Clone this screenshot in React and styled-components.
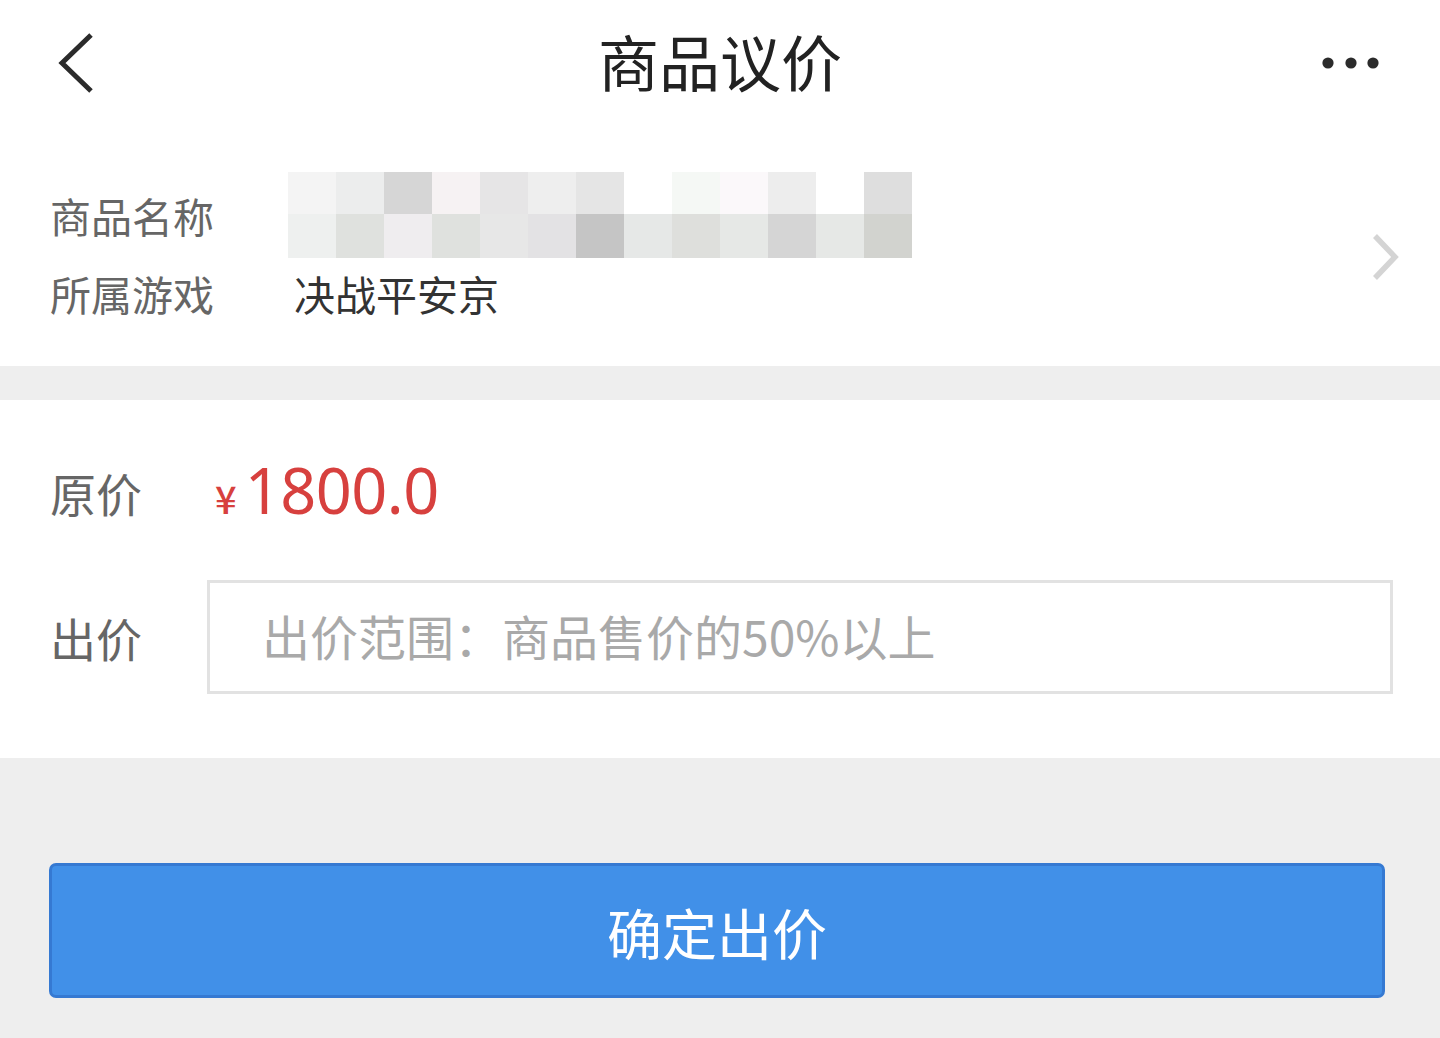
import React from 'react'
import styled, { createGlobalStyle } from 'styled-components';

const GlobalStyle = createGlobalStyle`
  html, body {
    margin: 0;
    padding: 0;
    background: #ffffff;
  }
  body {
    font-family: "Noto Sans CJK SC", "Noto Sans", sans-serif;
  }
  * {
    box-sizing: border-box;
  }
`;

// blurred product name in the screenshot, kept as a mosaic
const mosaicCells = [
  ['#f4f4f4', '#eceded', '#d6d6d6', '#f6f2f3', '#e6e5e6', '#eeeeee', '#e5e5e5', '#ffffff', '#f5f8f5', '#fbf8fa', '#ededed', '#ffffff', '#dedede'],
  ['#eef0ef', '#dfe1de', '#efedef', '#dfe1de', '#e7e7e7', '#e3e2e4', '#c5c5c5', '#e6e8e7', '#dedfdc', '#e6e8e6', '#d5d5d5', '#e6e8e6', '#d2d3cf'],
];

const App = () => {
  return (
    <Page>
      <GlobalStyle />
      <Header>
        <BackButton>
          <svg width="44" height="64" viewBox="0 0 44 64">
            <polyline points="36,4 7,32 36,60" fill="none" stroke="#2b2b2b" strokeWidth="5" strokeLinecap="butt" strokeLinejoin="miter" />
          </svg>
        </BackButton>
        <Title>商品议价</Title>
        <MoreButton>
          <svg width="58" height="14" viewBox="0 0 58 14">
            <circle cx="6" cy="7" r="5.6" fill="#2b2b2b" />
            <circle cx="29" cy="7" r="5.6" fill="#2b2b2b" />
            <circle cx="51" cy="7" r="5.6" fill="#2b2b2b" />
          </svg>
        </MoreButton>
      </Header>

      <InfoSection>
        <InfoList>
          <InfoRow>
            <InfoLabel>商品名称</InfoLabel>
            <Mosaic>
              {mosaicCells.map((row, r) =>
                row.map((c, i) => <MosaicCell key={r + '-' + i} $color={c} />)
              )}
            </Mosaic>
          </InfoRow>
          <InfoRow>
            <InfoLabel>所属游戏</InfoLabel>
            <InfoValue>决战平安京</InfoValue>
          </InfoRow>
        </InfoList>
        <Arrow>
          <svg width="30" height="50" viewBox="0 0 30 50">
            <polyline points="5,4 25,25 5,46" fill="none" stroke="#d4d4d4" strokeWidth="5.5" />
          </svg>
        </Arrow>
      </InfoSection>

      <Divider />

      <PriceSection>
        <PriceRow>
          <PriceLabel>原价</PriceLabel>
          <PriceValue>
            <Currency>¥</Currency>
            <Amount>1800.0</Amount>
          </PriceValue>
        </PriceRow>
        <PriceRow>
          <PriceLabel>出价</PriceLabel>
          <OfferInput placeholder="出价范围：商品售价的50%以上" />
        </PriceRow>
      </PriceSection>

      <Footer>
        <SubmitButton>确定出价</SubmitButton>
      </Footer>
    </Page>
  )
}

const Page = styled.div`
  width: 1440px;
  min-height: 1038px;
  display: flex;
  flex-direction: column;
  background: #ffffff;
`;

const Header = styled.header`
  height: 130px;
  display: grid;
  grid-template-columns: 1fr auto 1fr;
  align-items: center;
`;

const BackButton = styled.div`
  padding-left: 55px;
  display: flex;
  align-items: center;
  margin-top: -4px;
`;

const Title = styled.h1`
  margin: -10px 0 0;
  font-size: 61px;
  font-weight: 400;
  color: #222222;
  line-height: 1;
`;

const MoreButton = styled.div`
  justify-self: end;
  padding-right: 60px;
  display: flex;
  align-items: center;
  margin-top: -4px;
`;

const InfoSection = styled.section`
  height: 236px;
  display: flex;
  align-items: center;
  justify-content: space-between;
  padding: 12px 40px 0 50px;
`;

const InfoList = styled.div`
  display: flex;
  flex-direction: column;
`;

const InfoRow = styled.div`
  height: 78px;
  display: flex;
  align-items: center;
`;

const InfoLabel = styled.span`
  width: 238px;
  font-size: 41px;
  color: #666666;
`;

const InfoValue = styled.span`
  font-size: 41px;
  color: #333333;
  padding-left: 6px;
`;

const Mosaic = styled.div`
  display: grid;
  grid-template-columns: repeat(13, 48px);
  grid-template-rows: 42px 44px;
  margin: -8px 0;
  filter: blur(0.6px);
`;

const MosaicCell = styled.div`
  background: ${p => p.$color};
`;

const Arrow = styled.div`
  display: flex;
  align-items: center;
  margin-top: 6px;
`;

const Divider = styled.div`
  height: 34px;
  background: #eeeeee;
`;

const PriceSection = styled.section`
  height: 358px;
  display: flex;
  flex-direction: column;
  gap: 36px;
  padding: 40px 47px 64px 50px;
`;

const PriceRow = styled.div`
  display: flex;
  align-items: center;
  min-height: 104px;
`;

const PriceLabel = styled.span`
  width: 157px;
  flex-shrink: 0;
  font-size: 46px;
  color: #666666;
`;

const PriceValue = styled.div`
  display: flex;
  align-items: baseline;
  padding-left: 8px;
  margin-top: -6px;
  color: #d7403e;
`;

const Currency = styled.span`
  font-family: "Noto Sans CJK SC", sans-serif;
  font-size: 38px;
  font-weight: 500;
  margin-right: 8px;
`;

const Amount = styled.span`
  font-family: "Noto Sans", sans-serif;
  font-size: 63px;
  letter-spacing: -0.5px;
`;

const OfferInput = styled.input`
  flex: 1;
  height: 114px;
  border: 3px solid #e2e2e2;
  border-radius: 0;
  outline: none;
  padding: 0 0 4px 52px;
  font-family: "Noto Sans CJK SC", sans-serif;
  font-size: 48px;
  color: #333333;
  background: #ffffff;

  &::placeholder {
    color: #a9a9a9;
  }
`;

const Footer = styled.footer`
  flex: 1;
  background: #eeeeee;
  padding: 105px 55px 40px 49px;
`;

const SubmitButton = styled.button`
  width: 100%;
  height: 135px;
  border: 3px solid #3579d2;
  border-radius: 7px;
  background: #4190e8;
  color: #ffffff;
  font-family: "Noto Sans CJK SC", sans-serif;
  font-size: 55px;
  font-weight: 400;
  cursor: pointer;
`;

export default App
